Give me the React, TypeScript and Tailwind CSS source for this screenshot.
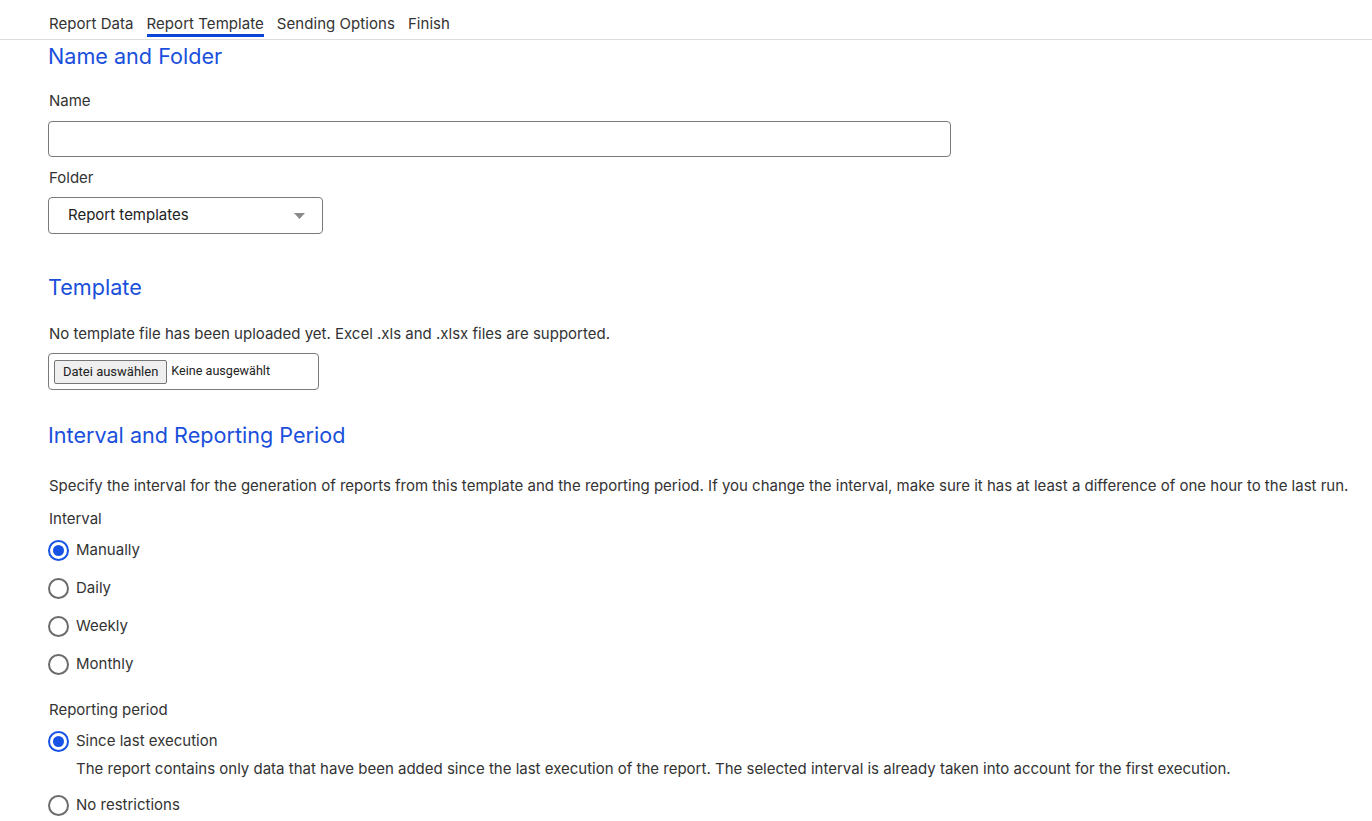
import { useState } from "react";

const tabs = ["Report Data", "Report Template", "Sending Options", "Finish"];
const intervals = ["Manually", "Daily", "Weekly", "Monthly"];

function Radio({ checked, label, onSelect }: { checked: boolean; label: string; onSelect: () => void }) {
  return (
    <button type="button" onClick={onSelect} className="flex items-center gap-[7px] h-[24px] text-left">
      <span
        className={
          checked
            ? "w-[21px] h-[21px] rounded-full border-2 border-[#1553e6] flex items-center justify-center"
            : "w-[21px] h-[21px] rounded-full border-2 border-[#6b6b6b]"
        }
      >
        {checked && <span className="w-[11px] h-[11px] rounded-full bg-[#1553e6]" />}
      </span>
      <span>{label}</span>
    </button>
  );
}

export default function App() {
  const [interval, setInterval] = useState("Manually");
  const [period, setPeriod] = useState("since");

  return (
    <div className="min-h-screen bg-white text-[#333] text-[15px] font-['Inter',sans-serif]">
      {/* step tabs */}
      <div className="flex gap-[13px] px-[49px] border-b border-[#dcdcdc] h-[40px] items-start">
        {tabs.map((t) => (
          <div
            key={t}
            className={
              t === "Report Template"
                ? "pt-[14px] border-b-[3px] border-[#0a45d8] leading-[20px] tracking-[0.05px]"
                : "pt-[14px] leading-[20px] tracking-[0.05px]"
            }
          >
            {t}
          </div>
        ))}
      </div>

      <div className="pl-[48px] pr-[10px]">
        <h2 className="text-[21.6px] text-[#1a4fdc] leading-[32px]">Name and Folder</h2>

        <div className="mt-[19px] leading-[20px] pl-px">Name</div>
        <input className="mt-[10px] w-[903px] h-[36px] rounded-[4px] border border-[#7a7a7a] px-3 outline-none" />

        <div className="mt-[11px] leading-[20px] pl-px">Folder</div>
        <div className="mt-[9px] w-[275px] h-[37px] rounded-[4px] border border-[#7a7a7a] flex items-center justify-between pl-[19px] pr-[17px] text-[#222]">
          <span>Report templates</span>
          <svg width="11" height="6" viewBox="0 0 11 6">
            <path d="M0 0h11L5.5 6z" fill="#8a8a8a" />
          </svg>
        </div>

        <h2 className="mt-[37px] text-[21.6px] text-[#1a4fdc] leading-[32px]">Template</h2>
        <p className="mt-[21px] leading-[20px] pl-px">
          No template file has been uploaded yet. Excel .xls and .xlsx files are supported.
        </p>
        <div className="mt-[9px] w-[271px] h-[37px] rounded-[4px] border border-[#7a7a7a] flex items-center pl-[5px] gap-[4px] font-['Roboto',sans-serif] text-[13px] text-[#222]">
          <span className="h-[24px] px-[8px] flex items-center bg-[#efefef] border border-[#767676] rounded-[2px]">
            Datei auswählen
          </span>
          <span className="text-[12.6px]">Keine ausgewählt</span>
        </div>

        <h2 className="mt-[29px] text-[21.6px] text-[#1a4fdc] leading-[32px]">Interval and Reporting Period</h2>
        <p className="mt-[25px] leading-[20px] pl-px">
          Specify the interval for the generation of reports from this template and the reporting period. If you
          change the interval, make sure it has at least a difference of one hour to the last run.
        </p>

        <div className="mt-[13px] leading-[20px] pl-px">Interval</div>
        <div className="mt-[9px] flex flex-col gap-[14px]">
          {intervals.map((i) => (
            <Radio key={i} label={i} checked={interval === i} onSelect={() => setInterval(i)} />
          ))}
        </div>

        <div className="mt-[24px] leading-[20px] pl-px">Reporting period</div>
        <div className="mt-[9px]">
          <Radio label="Since last execution" checked={period === "since"} onSelect={() => setPeriod("since")} />
          <p className="mt-[6px] pl-[28px] leading-[20px]">
            The report contains only data that have been added since the last execution of the report. The selected
            interval is already taken into account for the first execution.
          </p>
          <div className="mt-[14px]">
            <Radio label="No restrictions" checked={period === "none"} onSelect={() => setPeriod("none")} />
          </div>
        </div>
      </div>
    </div>
  );
}
